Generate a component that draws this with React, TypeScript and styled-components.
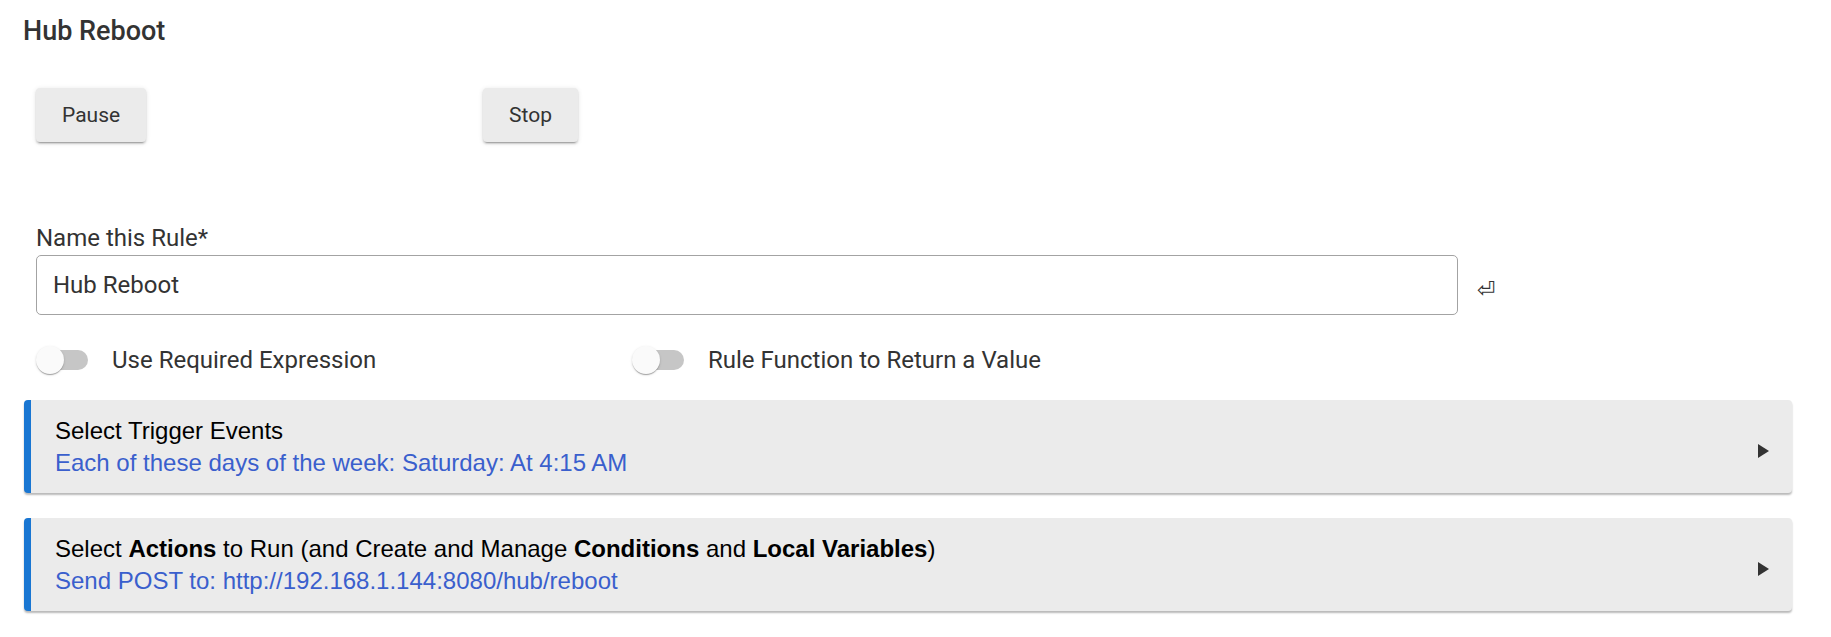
import React from 'react'
import styled, { createGlobalStyle } from 'styled-components'

const GlobalStyle = createGlobalStyle`
  body {
    margin: 0;
    background: #fff;
    font-family: Roboto, "Liberation Sans", sans-serif;
    color: #333;
  }
`

const Page = styled.div`
  padding: 14px 39px 20px 23px;
`

const Title = styled.h1`
  margin: 0;
  font-size: 27px;
  font-weight: 500;
  line-height: 34px;
  color: #333;
`

const ButtonRow = styled.div`
  display: flex;
  gap: 337px;
  margin: 40px 0 0 13px;
`

const Button = styled.button`
  height: 54px;
  padding: 0 26px;
  border: 0;
  border-radius: 4px;
  background: #ebebeb;
  font-family: Roboto, sans-serif;
  font-size: 21px;
  color: #333;
  box-shadow: 0 3px 1px -2px rgba(0, 0, 0, 0.2), 0 2px 2px rgba(0, 0, 0, 0.14),
    0 1px 5px rgba(0, 0, 0, 0.12);
`

const Field = styled.div`
  margin: 82px 0 0 13px;
`

const Label = styled.label`
  display: block;
  font-size: 24px;
  line-height: 28px;
  color: #333;
`

const InputRow = styled.div`
  display: flex;
  align-items: center;
  margin-top: 3px;
`

const Input = styled.input`
  box-sizing: border-box;
  width: 1422px;
  height: 60px;
  padding: 0 16px;
  border: 1px solid #a3a3a3;
  border-radius: 5px;
  font-family: Roboto, sans-serif;
  font-size: 24px;
  color: #333;
  outline: none;
`

const ReturnMark = styled.span`
  margin-left: 19px;
  padding-top: 10px;
  font-family: "DejaVu Sans", sans-serif;
  font-size: 22px;
  line-height: 1;
  color: #333;
`

const ToggleRow = styled.div`
  display: grid;
  grid-template-columns: 596px auto;
  align-items: center;
  height: 30px;
  margin: 30px 0 0 13px;
`

const ToggleItem = styled.div`
  display: flex;
  align-items: center;
`

const Switch = styled.span`
  position: relative;
  display: flex;
  align-items: center;
  width: 52px;
  height: 28px;
`

const Track = styled.span`
  display: block;
  width: 48px;
  height: 20px;
  margin-left: 4px;
  border-radius: 10px;
  background: #c6c6c6;
`

const Thumb = styled.span`
  position: absolute;
  left: 0;
  top: 0;
  width: 28px;
  height: 28px;
  border-radius: 50%;
  background: #fafafa;
  box-shadow: 0 2px 1px -1px rgba(0, 0, 0, 0.2), 0 1px 1px rgba(0, 0, 0, 0.14),
    0 1px 3px rgba(0, 0, 0, 0.12);
`

const ToggleLabel = styled.span`
  margin-left: 24px;
  font-size: 24px;
  color: #333;
`

const Card = styled.div`
  display: flex;
  align-items: center;
  justify-content: space-between;
  margin: 25px 0 0 1px;
  padding: 15px 23px 14px 24px;
  border-left: 7px solid #1976d2;
  border-radius: 4px;
  background: #ebebeb;
  box-shadow: 0 2px 2px rgba(0, 0, 0, 0.28);
  font-family: "Liberation Sans", Arial, sans-serif;
  font-size: 24px;
  line-height: 32px;
`

const CardTitle = styled.div`
  color: #000;
  b {
    font-weight: 700;
  }
`

const CardValue = styled.div`
  color: #3a5fcd;
`

const Arrow = () => (
  <svg width="11" height="14" viewBox="0 0 11 14" style={{ marginTop: 8 }}>
    <polygon points="0,0 11,7 0,14" fill="#333" />
  </svg>
)

const Toggle = ({ label }: { label: string }) => (
  <ToggleItem>
    <Switch>
      <Track />
      <Thumb />
    </Switch>
    <ToggleLabel>{label}</ToggleLabel>
  </ToggleItem>
)

const App = () => (
  <Page>
    <GlobalStyle />
    <Title>Hub Reboot</Title>
    <ButtonRow>
      <Button>Pause</Button>
      <Button>Stop</Button>
    </ButtonRow>
    <Field>
      <Label>Name this Rule*</Label>
      <InputRow>
        <Input defaultValue="Hub Reboot" />
        <ReturnMark>⏎</ReturnMark>
      </InputRow>
    </Field>
    <ToggleRow>
      <Toggle label="Use Required Expression" />
      <Toggle label="Rule Function to Return a Value" />
    </ToggleRow>
    <Card>
      <div>
        <CardTitle>Select Trigger Events</CardTitle>
        <CardValue>Each of these days of the week: Saturday: At 4:15 AM</CardValue>
      </div>
      <Arrow />
    </Card>
    <Card>
      <div>
        <CardTitle>
          Select <b>Actions</b> to Run (and Create and Manage <b>Conditions</b> and{' '}
          <b>Local Variables</b>)
        </CardTitle>
        <CardValue>Send POST to: http://192.168.1.144:8080/hub/reboot</CardValue>
      </div>
      <Arrow />
    </Card>
  </Page>
)

export default App
